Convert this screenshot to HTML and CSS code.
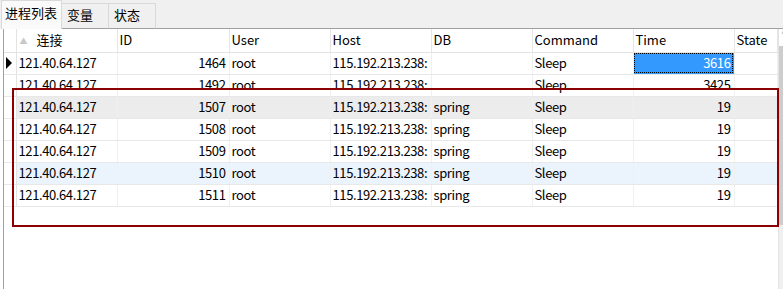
FILE: index.html
```html
<!DOCTYPE html>
<html>
	<head>
		<meta charset="utf-8" />
		<title>进程列表</title>
		<link rel="stylesheet" href="styles.css">
	</head>
	<body>
		<div class="tabs">
			<span class="tab active">进程列表</span>
			<span class="tab">变量</span>
			<span class="tab">状态</span>
			<span class="tab-rest"></span>
		</div>

		<div class="panel">
			<div class="grid">
				<table>
					<colgroup>
						<col class="c-ind">
						<col class="c-101">
						<col class="c-id">
						<col class="c-101">
						<col class="c-101">
						<col class="c-101">
						<col class="c-101">
						<col class="c-101">
						<col class="c-state">
					</colgroup>
					<thead>
						<tr>
							<th class="ind"></th>
							<th><span class="sort">&#9650;</span>连接</th>
							<th>ID</th>
							<th>User</th>
							<th>Host</th>
							<th>DB</th>
							<th>Command</th>
							<th>Time</th>
							<th>State</th>
						</tr>
					</thead>
					<tbody>
						<tr>
							<td class="ind"><span class="arrow"></span></td>
							<td>121.40.64.127</td>
							<td class="num">1464</td>
							<td>root</td>
							<td>115.192.213.238:</td>
							<td></td>
							<td>Sleep</td>
							<td class="num selected">3616</td>
							<td></td>
						</tr>
						<tr>
							<td class="ind"></td>
							<td>121.40.64.127</td>
							<td class="num">1492</td>
							<td>root</td>
							<td>115.192.213.238:</td>
							<td></td>
							<td>Sleep</td>
							<td class="num">3425</td>
							<td></td>
						</tr>
						<tr class="hover">
							<td class="ind"></td>
							<td>121.40.64.127</td>
							<td class="num">1507</td>
							<td>root</td>
							<td>115.192.213.238:</td>
							<td>spring</td>
							<td>Sleep</td>
							<td class="num">19</td>
							<td></td>
						</tr>
						<tr>
							<td class="ind"></td>
							<td>121.40.64.127</td>
							<td class="num">1508</td>
							<td>root</td>
							<td>115.192.213.238:</td>
							<td>spring</td>
							<td>Sleep</td>
							<td class="num">19</td>
							<td></td>
						</tr>
						<tr>
							<td class="ind"></td>
							<td>121.40.64.127</td>
							<td class="num">1509</td>
							<td>root</td>
							<td>115.192.213.238:</td>
							<td>spring</td>
							<td>Sleep</td>
							<td class="num">19</td>
							<td></td>
						</tr>
						<tr class="alt">
							<td class="ind"></td>
							<td>121.40.64.127</td>
							<td class="num">1510</td>
							<td>root</td>
							<td>115.192.213.238:</td>
							<td>spring</td>
							<td>Sleep</td>
							<td class="num">19</td>
							<td></td>
						</tr>
						<tr>
							<td class="ind"></td>
							<td>121.40.64.127</td>
							<td class="num">1511</td>
							<td>root</td>
							<td>115.192.213.238:</td>
							<td>spring</td>
							<td>Sleep</td>
							<td class="num">19</td>
							<td></td>
						</tr>
					</tbody>
				</table>
				<div class="scrollbar">
					<span class="scroll-up">&#708;</span>
					<span class="scroll-thumb"></span>
				</div>
			</div>
			<div class="mark"></div>
		</div>
	</body>
</html>
```

FILE: styles.css
```css
* {
	padding: 0;
	margin: 0;
	box-sizing: border-box;
}

html, body {
	height: 100%;
}

body {
	display: flex;
	flex-direction: column;
	background: #fff;
	font-family: 'Noto Sans CJK SC', 'Noto Sans', sans-serif;
	font-size: 13px;
	color: #000;
	overflow: hidden;
}

/* Tabs */
.tabs {
	display: flex;
	align-items: flex-end;
	height: 29px;
	padding-left: 1px;
	background: #f0f0f0;
}

.tab {
	height: 26px;
	padding: 1px 5px 0;
	border: 1px solid #d9d9d9;
	border-bottom: 1px solid #a0a0a0;
	border-left: none;
	background: #f0f0f0;
	line-height: 20px;
	width: 47px;
}

.tab.active {
	height: 29px;
	width: 61px;
	padding: 2px 3px 0;
	border: 1px solid #d9d9d9;
	border-bottom: none;
	background: #fafafa;
	line-height: 20px;
}

.tab-rest {
	flex: 1;
	height: 1px;
	background: #a0a0a0;
}

/* Panel and grid */
.panel {
	position: relative;
	flex: 1;
	padding-left: 3px;
}

.grid {
	display: flex;
	height: 100%;
	border-left: 1px solid #a0a0a0;
}

table {
	table-layout: fixed;
	border-collapse: collapse;
	width: 773px;
	align-self: flex-start;
	flex-shrink: 0;
}

.c-ind { width: 12px; }
.c-101 { width: 101px; }
.c-id { width: 112px; }
.c-state { width: 43px; }

th, td {
	height: 22px;
	padding: 0 3px 0 2px;
	text-align: left;
	font-weight: normal;
	letter-spacing: -0.4px;
	white-space: nowrap;
	overflow: hidden;
	border-right: 1px solid #f0f0f0;
	border-bottom: 1px solid #e8e8e8;
	line-height: 20px;
}

th {
	height: 23px;
	letter-spacing: 0;
	border-right: 1px solid #e6e6e6;
	border-bottom: 1px solid #e3e3e3;
	background: #fff;
}

.ind {
	padding: 0;
	border-right: 1px solid #e3e3e3;
}

.sort {
	display: inline-block;
	width: 18px;
	padding-left: 1px;
	font-size: 8px;
	color: #c8c8c8;
	vertical-align: 1px;
}

.arrow {
	display: block;
	width: 0;
	height: 0;
	margin-left: 2px;
	border-top: 6px solid transparent;
	border-bottom: 6px solid transparent;
	border-left: 6px solid #000;
}

.num {
	text-align: right;
}

tr.hover td:not(.ind) {
	background: #ececec;
}

tr.alt td:not(.ind) {
	background: #ebf4fc;
}

td.selected {
	background: #3399ff;
	color: #fff;
	outline: 1px dotted #000;
	outline-offset: -2px;
}

/* Scrollbar, cut off at the window edge */
.scrollbar {
	display: flex;
	flex-direction: column;
	width: 12px;
	flex-shrink: 0;
	background: #f0f0f0;
	border-left: 1px solid #e3e3e3;
}

.scroll-up {
	height: 17px;
	background: #fff;
	padding-left: 3px;
	font-size: 10px;
	line-height: 14px;
	color: #606060;
}

.scroll-thumb {
	height: 179px;
	background: #cdcdcd;
}

/* Red annotation box drawn over the grid */
.mark {
	position: absolute;
	left: 12px;
	top: 59px;
	width: 767px;
	height: 139px;
	border: 2px solid #8b0000;
}
```
